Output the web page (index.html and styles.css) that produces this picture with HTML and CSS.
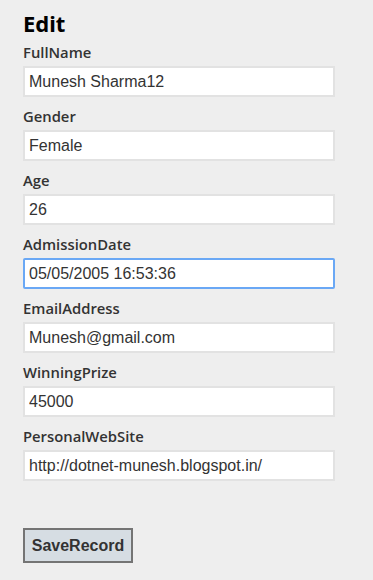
FILE: index.html
```html
<!DOCTYPE html>
<html lang="en">
<head>
  <meta charset="UTF-8">
  <meta name="viewport" content="width=device-width, initial-scale=1.0">
  <title>Edit</title>
  <link rel="stylesheet" href="styles.css">
</head>
<body>
  <form class="edit-form">
    <h2 class="title">Edit</h2>
    <div class="field">
      <label for="FullName">FullName</label>
      <input type="text" id="FullName" value="Munesh Sharma12">
    </div>
    <div class="field">
      <label for="Gender">Gender</label>
      <input type="text" id="Gender" value="Female">
    </div>
    <div class="field">
      <label for="Age">Age</label>
      <input type="text" id="Age" value="26">
    </div>
    <div class="field">
      <label for="AdmissionDate">AdmissionDate</label>
      <input type="text" id="AdmissionDate" class="active" value="05/05/2005 16:53:36">
    </div>
    <div class="field">
      <label for="EmailAddress">EmailAddress</label>
      <input type="text" id="EmailAddress" value="Munesh@gmail.com">
    </div>
    <div class="field">
      <label for="WinningPrize">WinningPrize</label>
      <input type="text" id="WinningPrize" value="45000">
    </div>
    <div class="field">
      <label for="PersonalWebSite">PersonalWebSite</label>
      <input type="text" id="PersonalWebSite" value="http://dotnet-munesh.blogspot.in/">
    </div>
    <div class="actions">
      <button type="button" class="save">SaveRecord</button>
    </div>
  </form>
</body>
</html>
```

FILE: styles.css
```css
*{
  margin: 0;
  padding: 0;
  box-sizing: border-box;
}
body{
  background-color: #eeeeee;
  font-family: "Open Sans", "Noto Sans", Arial, sans-serif;
  color: #333333;
}
.edit-form{
  display: flex;
  flex-direction: column;
  padding: 9px 0 0 23px;
}
.title{
  font-family: "Noto Sans", Arial, sans-serif;
  font-size: 22px;
  font-weight: 700;
  color: #000000;
  line-height: 28px;
  margin-bottom: 5px;
}
.field{
  display: flex;
  flex-direction: column;
  margin-bottom: 9px;
}
.field label{
  font-size: 14.8px;
  font-weight: 600;
  line-height: 20px;
  margin-bottom: 4px;
}
.field input{
  width: 312px;
  height: 31px;
  padding: 0 4px;
  border: 2px solid #e2e2e2;
  background-color: #ffffff;
  font-family: "Liberation Sans", Arial, sans-serif;
  font-size: 16px;
  color: #333333;
  outline: none;
}
.field input.active{
  border-color: #6aa8f5;
  border-radius: 2px;
}
.actions{
  padding-top: 38px;
}
.save{
  width: 110px;
  height: 35px;
  background-color: #d6dde3;
  border: 2px solid #747474;
  font-family: "Liberation Sans", Arial, sans-serif;
  font-size: 16px;
  font-weight: 700;
  color: #333333;
}
```
